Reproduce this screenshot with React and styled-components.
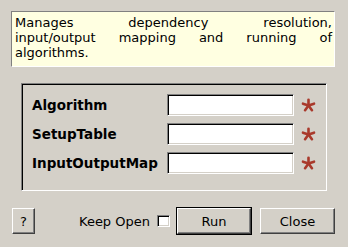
import React from "react";
import styled, { createGlobalStyle } from "styled-components";

const GlobalStyle = createGlobalStyle`
	html, body {
		margin: 0;
		padding: 0;
		background: #d4d0c8;
	}
	body {
		font-family: "DejaVu Sans", "Liberation Sans", sans-serif;
		font-size: 13px;
		color: #000;
	}
`;

const Dialog = styled.div`
	width: 348px;
	height: 247px;
	box-sizing: border-box;
	padding-top: 11px;
	background: #d4d0c8;
	display: flex;
	flex-direction: column;
`;

const Info = styled.div`
	margin-left: 11px;
	width: 324px;
	height: 56px;
	box-sizing: border-box;
	padding: 3px 2px 0 3px;
	background: #ffffe1;
	border: 1px solid;
	border-color: #808080 #ffffff #ffffff #808080;
	font-size: 13px;
	line-height: 15px;
`;

const InfoLine = styled.div`
	text-align: ${(p) => (p.$last ? "left" : "justify")};
	text-align-last: ${(p) => (p.$last ? "left" : "justify")};
`;

const Frame = styled.div`
	margin: 16px 0 0 21px;
	width: 306px;
	height: 108px;
	box-sizing: border-box;
	padding: 10px 9px 0 10px;
	border: 1px solid;
	border-color: #808080 #ffffff #ffffff #808080;
	box-shadow: inset 1px 1px 0 #000000;
	display: grid;
	grid-template-columns: 135px 127px 22px;
	grid-auto-rows: 22px;
	row-gap: 7px;
	align-content: start;
`;

const Label = styled.div`
	font-weight: bold;
	font-size: 13.5px;
	display: flex;
	align-items: center;
`;

const Entry = styled.input`
	box-sizing: border-box;
	width: 127px;
	height: 22px;
	margin: 0;
	padding: 0 3px;
	background: #ffffff;
	border: 1px solid;
	border-color: #808080 #ffffff #ffffff #808080;
	box-shadow: inset 1px 1px 0 #000000, inset -1px -1px 0 #d4d0c8;
	outline: none;
	font: 13px "DejaVu Sans", sans-serif;
`;

const Required = styled.div`
	display: flex;
	align-items: center;
	padding-left: 7px;
`;

const Footer = styled.div`
	margin-top: 17px;
	padding-left: 12px;
	display: flex;
	align-items: center;
	height: 26px;
`;

const Button = styled.button`
	box-sizing: border-box;
	width: ${(p) => p.$w}px;
	height: 26px;
	margin: 0 0 0 ${(p) => p.$ml || 0}px;
	padding: 0;
	background: #d4d0c8;
	border: 1px solid;
	border-color: #ffffff #404040 #404040 #ffffff;
	box-shadow: inset -1px -1px 0 #808080;
	font: 13px "DejaVu Sans", sans-serif;
	color: #000;
	outline: ${(p) => (p.$default ? "1px solid #000" : "none")};
	outline-offset: 0;
`;

const KeepOpen = styled.label`
	margin-left: 44px;
	display: flex;
	align-items: center;
	gap: 7px;
	font-size: 13px;
`;

const Check = styled.span`
	box-sizing: border-box;
	width: 13px;
	height: 12px;
	background: #ffffff;
	border: 1px solid;
	border-color: #808080 #ffffff #ffffff #808080;
	box-shadow: inset 1px 1px 0 #000000, inset -1px -1px 0 #d4d0c8;
`;

const Asterisk = () => (
	<svg width="15" height="14" viewBox="0 0 15 14">
		<g stroke="#a9392b" strokeWidth="2.6" strokeLinecap="round">
			{[-90, -18, 54, 126, 198].map((a) => {
				const r = (a * Math.PI) / 180;
				return (
					<line
						key={a}
						x1="7.5"
						y1="7.5"
						x2={7.5 + 5.8 * Math.cos(r)}
						y2={7.5 + 5.8 * Math.sin(r)}
					/>
				);
			})}
		</g>
	</svg>
);

const fields = ["Algorithm", "SetupTable", "InputOutputMap"];

const infoLines = [
	"Manages dependency resolution,",
	"input/output mapping and running of",
	"algorithms.",
];

export default function App() {
	return (
		<>
			<GlobalStyle />
			<Dialog>
				<Info>
					{infoLines.map((line, i) => (
						<InfoLine key={i} $last={i === infoLines.length - 1}>
							{line}
						</InfoLine>
					))}
				</Info>
				<Frame>
					{fields.map((name) => (
						<React.Fragment key={name}>
							<Label>{name}</Label>
							<Entry />
							<Required>
								<Asterisk />
							</Required>
						</React.Fragment>
					))}
				</Frame>
				<Footer>
					<Button $w={23}>?</Button>
					<KeepOpen>
						Keep Open
						<Check />
					</KeepOpen>
					<Button $w={74} $ml={7} $default>
						Run
					</Button>
					<Button $w={75} $ml={9}>
						Close
					</Button>
				</Footer>
			</Dialog>
		</>
	);
}
